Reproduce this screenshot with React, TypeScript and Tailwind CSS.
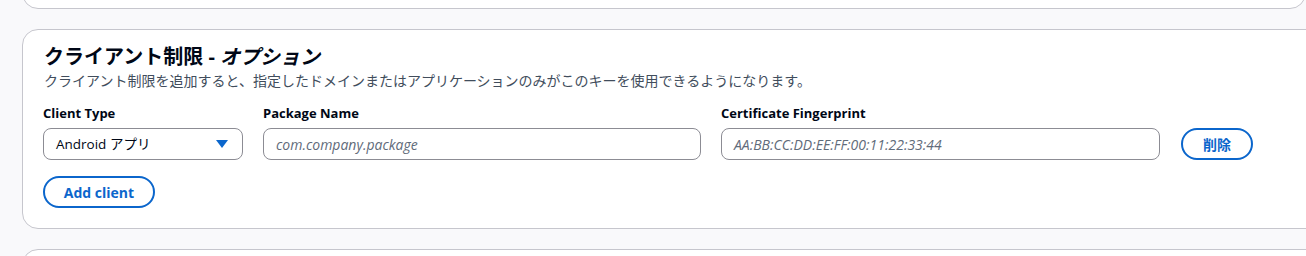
const FONT = "font-['Open_Sans','Noto_Sans_CJK_JP',sans-serif]"

function Label({ children }: { children: React.ReactNode }) {
  return <div className="mb-[6px] text-[13px] font-bold leading-[18px] text-[#000716]">{children}</div>
}

export default function App() {
  return (
    <div className={`h-[256px] w-[1306px] overflow-hidden bg-[#f9f9fb] ${FONT}`}>
      {/* previous card (cut off) */}
      <div className="ml-[22px] -mt-[20px] h-[29px] rounded-b-[16px] border border-[#c6c6cd] bg-white" />

      <div className="ml-[22px] mt-[20px] -mr-[20px] h-[200px] rounded-[16px] border border-[#c6c6cd] bg-white px-[20px] pt-[14px]">
        <h2 className="ml-[1px] text-[20px] font-bold leading-[26px] text-[#000716]">
          クライアント制限 - <i>オプション</i>
        </h2>
        <p className="ml-[1px] mt-[1px] text-[14px] leading-[20px] text-[#414d5c]">
          クライアント制限を追加すると、指定したドメインまたはアプリケーションのみがこのキーを使用できるようになります。
        </p>

        <div className="mt-[13px] flex items-end gap-[20px]">
          <div className="w-[200px]">
            <Label>Client Type</Label>
            <div className="flex h-[32px] items-center justify-between rounded-[8px] border border-[#8c8c94] pl-[12px] pr-[14px] text-[13.5px] text-[#000716]">
              <span>Android アプリ</span>
              <svg width="12" height="8" viewBox="0 0 12 8"><path d="M0 0h12L6 8z" fill="#0b66cc" /></svg>
            </div>
          </div>
          <div className="w-[438px]">
            <Label>Package Name</Label>
            <div className="flex h-[32px] items-center rounded-[8px] border border-[#8c8c94] px-[12px] text-[14px] italic text-[#5f6b7a]">
              com.company.package
            </div>
          </div>
          <div className="w-[439px]">
            <Label>Certificate Fingerprint</Label>
            <div className="flex h-[32px] items-center rounded-[8px] border border-[#8c8c94] px-[12px] text-[14px] italic text-[#5f6b7a]">
              AA:BB:CC:DD:EE:FF:00:11:22:33:44
            </div>
          </div>
          <button className="ml-[1px] flex h-[32px] w-[72px] items-center justify-center rounded-full border-2 border-[#0b66cc] text-[14px] font-bold text-[#0b66cc]">
            削除
          </button>
        </div>

        <button className="mt-[16px] flex h-[32px] w-[112px] items-center justify-center rounded-full border-2 border-[#0b66cc] text-[14px] font-bold text-[#0b66cc]">
          Add client
        </button>
      </div>

      <div className="ml-[22px] mt-[20px] -mr-[20px] h-[40px] rounded-t-[16px] border border-[#c6c6cd] bg-white" />
    </div>
  )
}
